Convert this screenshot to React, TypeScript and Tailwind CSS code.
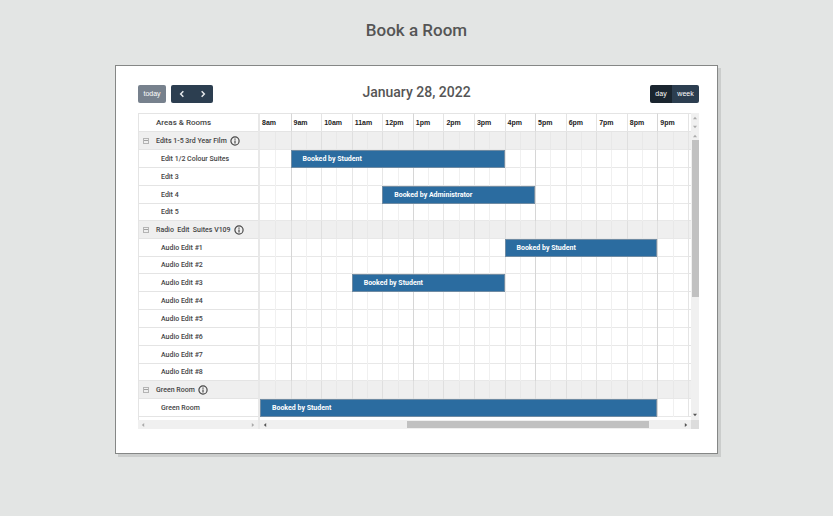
import { ReactNode } from "react";
import clsx from "clsx";

type Row = {
  name: string;
  group?: boolean;
  compact?: boolean;
  booking?: { from: number; to: number; label: string };
};

const hours = ["8am", "9am", "10am", "11am", "12pm", "1pm", "2pm", "3pm", "4pm", "5pm", "6pm", "7pm", "8pm", "9pm"];

// Booking times are half-hour slots counted from 8am.
const rows: Row[] = [
  { name: "Edits 1-5 3rd Year Film", group: true },
  { name: "Edit 1/2 Colour Suites", booking: { from: 2, to: 16, label: "Booked by Student" } },
  { name: "Edit 3" },
  { name: "Edit 4", booking: { from: 8, to: 18, label: "Booked by Administrator" } },
  { name: "Edit 5", compact: true },
  { name: "Radio  Edit  Suites V109", group: true },
  { name: "Audio Edit #1", booking: { from: 16, to: 26, label: "Booked by Student" } },
  { name: "Audio Edit #2", compact: true },
  { name: "Audio Edit #3", booking: { from: 6, to: 16, label: "Booked by Student" } },
  { name: "Audio Edit #4" },
  { name: "Audio Edit #5" },
  { name: "Audio Edit #6" },
  { name: "Audio Edit #7" },
  { name: "Audio Edit #8", compact: true },
  { name: "Green Room", group: true },
  { name: "Green Room", booking: { from: 0, to: 26, label: "Booked by Student" } },
];

function InfoIcon() {
  return (
    <svg viewBox="0 0 20 20" className="block size-[10px]" fill="none" stroke="#484848" strokeWidth="2.4">
      <circle cx="10" cy="10" r="8.2" />
      <path d="M10 9v6" />
      <path d="M10 5v2.4" />
    </svg>
  );
}

function Arrow({ dir, dark }: { dir: "up" | "down" | "left" | "right"; dark?: boolean }) {
  const d = { up: "M0 4 2.500 1 5 4z", down: "M0 1 2.500 4 5 1z", left: "M4 0 1 2.500 4 5z", right: "M1 0 4 2.500 1 5z" }[dir];
  return (
    <svg viewBox="0 0 5 5" className="block size-1 shrink-0">
      <path d={d} fill={dark ? "#555" : "#aaa"} />
    </svg>
  );
}

function Chevron({ dir }: { dir: "left" | "right" }) {
  return (
    <svg viewBox="0 0 8 10" className="block h-2 w-1.5" fill="none" stroke="#e6e9ec" strokeWidth="2">
      <path d={dir === "left" ? "M5.800 1.200 2.200 5l3.600 3.800" : "M2.200 1.200 5.800 5 2.200 8.800"} />
    </svg>
  );
}

function ToolButton({ className, label, children }: { className: string; label?: string; children: ReactNode }) {
  return (
    <button type="button" aria-label={label} className={clsx("flex h-full items-center justify-center", className)}>
      {children}
    </button>
  );
}

function slotBorder(slot: number) {
  if (slot === 0) return "";
  if (slot % 2 === 1) return "border-l border-[#f0f0f0]";
  return slot % 8 === 2 ? "border-l border-[#d6d6d6]" : "border-l border-[#e6e6e6]";
}

function groupSlotBorder(slot: number) {
  if (slot === 0) return "";
  return slot % 2 === 1 ? "border-l border-[#e8e8e8]" : "border-l border-[#dfdfdf]";
}

function TimeSlots({ row }: { row: Row }) {
  const cells: ReactNode[] = [];
  for (let slot = 0; slot < 28; slot++) {
    const b = row.booking;
    if (b && slot === b.from) {
      cells.push(
        <td
          key={slot}
          colSpan={b.to - b.from}
          className="border border-[#6f8ba3] bg-[#2b6ca0] p-0 pl-[11px] text-left font-bold text-white"
        >
          {b.label}
        </td>
      );
      slot = b.to - 1;
      continue;
    }
    cells.push(
      <td key={slot} className={clsx("p-0", row.group ? groupSlotBorder(slot) : slotBorder(slot))}>
        <div className={clsx("border-b border-[#e8e8e8]", row.compact ? "h-[17px]" : "h-[18px]")} />
      </td>
    );
  }
  return <>{cells}</>;
}

function Schedule() {
  return (
    <table className="w-full table-fixed border-separate border-spacing-0 text-[7px] leading-[8px] text-[#444]">
      <colgroup>
        <col className="w-[120px]" />
        <col className="w-[2px]" />
        {Array.from({ length: 28 }, (_, i) => (
          <col key={i} />
        ))}
        <col className="w-[3px]" />
      </colgroup>
      <thead>
        <tr className="h-[19px]">
          <th scope="col" className="border-y border-l border-[#e4e4e4] p-0 pt-px pl-[17px] text-left text-[8px] font-medium">
            Areas &amp; Rooms
          </th>
          <td className="bg-[#e8e8e8] p-0" />
          {hours.map((h, i) => (
            <th
              key={h}
              scope="col"
              colSpan={2}
              className={clsx(
                "border-y border-y-[#e4e4e4] p-0 pt-px pl-[2px] text-left font-['Liberation_Sans',sans-serif] font-bold text-[#222]",
                i > 0 && (i % 4 === 1 ? "border-l border-l-[#d6d6d6]" : "border-l border-l-[#e4e4e4]")
              )}
            >
              {h}
            </th>
          ))}
          <td className="border-y border-l border-[#e4e4e4] p-0" />
        </tr>
      </thead>
      <tbody>
        {rows.map((row, i) => (
          <tr key={i} className={clsx(row.compact ? "h-[17px]" : "h-[18px]", row.group && "bg-[#efefef]")}>
            <th
              scope="row"
              className={clsx("border-b border-l border-[#e4e4e4] p-0 text-left font-medium whitespace-pre", row.group ? "pl-1" : "pl-[22px]")}
            >
              {row.group ? (
                <div className="flex items-center">
                  <button
                    type="button"
                    aria-label="Collapse group"
                    className="mr-[7px] flex size-1.5 items-center justify-center border border-[#b4b4b4]"
                  >
                    <span className="h-px w-1 bg-[#a0a0a0]" />
                  </button>
                  {row.name}
                  <button type="button" aria-label="Group details" className="ml-[3px]">
                    <InfoIcon />
                  </button>
                </div>
              ) : (
                row.name
              )}
            </th>
            <td className="bg-[#e8e8e8] p-0" />
            <TimeSlots row={row} />
            <td className="border-b border-l border-[#e4e4e4] p-0" />
          </tr>
        ))}
      </tbody>
    </table>
  );
}

export default function App() {
  return (
    <div className="min-h-screen bg-[#e3e5e4] px-[115px] pt-[18px] pb-[62px] font-['Roboto',sans-serif] text-[#555]">
      <h1 className="text-center text-[17px] leading-6 font-medium">Book a Room</h1>

      <main className="mt-[23px] border border-[#858786] bg-white pt-[19px] pr-[18px] pb-6 pl-[22px] shadow-[3px_3px_0_#cbcdcc]">
        <header className="grid grid-cols-[1fr_auto_1fr] items-center">
          <div className="flex h-[18px] gap-[5px] font-['Liberation_Sans',sans-serif] text-[7px] text-white">
            <ToolButton className="w-7 rounded-[2px] bg-[#77818d]">today</ToolButton>
            <div className="flex w-[42px] overflow-hidden rounded-[2px] bg-[#2c3e50]">
              <ToolButton className="flex-1" label="Previous day">
                <Chevron dir="left" />
              </ToolButton>
              <ToolButton className="flex-1" label="Next day">
                <Chevron dir="right" />
              </ToolButton>
            </div>
          </div>
          <h2 className="pr-1 pb-1 text-[14px] leading-[14px] font-medium">January 28, 2022</h2>
          <div className="flex h-[18px] justify-self-end overflow-hidden rounded-[2px] font-['Liberation_Sans',sans-serif] text-[7px] text-white">
            <ToolButton className="w-[22px] bg-[#1a252f]">day</ToolButton>
            <ToolButton className="w-[27px] bg-[#2c3e50]">week</ToolButton>
          </div>
        </header>

        <section className="mt-[10px] flex" aria-label="Room schedule">
          <div className="min-w-0 flex-1">
            <Schedule />
            <div className="flex h-[3px]" aria-hidden="true">
              <div className="w-[120px] border-l border-[#e4e4e4]" />
              <div className="w-[2px] bg-[#e8e8e8]" />
            </div>
            <div className="flex h-[9px]" aria-hidden="true">
              <div className="flex w-[120px] items-center justify-between bg-[#f0f0f0] px-[3px]">
                <Arrow dir="left" />
                <Arrow dir="right" />
              </div>
              <div className="w-[2px] bg-[#e8e8e8]" />
              <div className="flex flex-1 items-center bg-[#f0f0f0] px-[3px]">
                <Arrow dir="left" dark />
                <div className="mr-[35px] ml-auto h-[7px] w-[57%] bg-[#c1c1c1]" />
                <Arrow dir="right" dark />
              </div>
            </div>
          </div>
          <div className="flex w-2 flex-col" aria-hidden="true">
            <div className="flex h-[19px] flex-col items-center justify-between bg-[#f0f0f0] py-[3px]">
              <Arrow dir="up" />
              <Arrow dir="down" />
            </div>
            <div className="flex flex-1 flex-col items-center bg-[#f0f0f0] pt-[2px] pb-[3px]">
              <Arrow dir="up" />
              <div className="mt-0.5 h-[157px] w-[7px] bg-[#c1c1c1]" />
              <div className="mt-auto">
                <Arrow dir="down" dark />
              </div>
            </div>
            <div className="h-[9px] bg-[#dcdcdc]" />
          </div>
        </section>
      </main>
    </div>
  );
}
